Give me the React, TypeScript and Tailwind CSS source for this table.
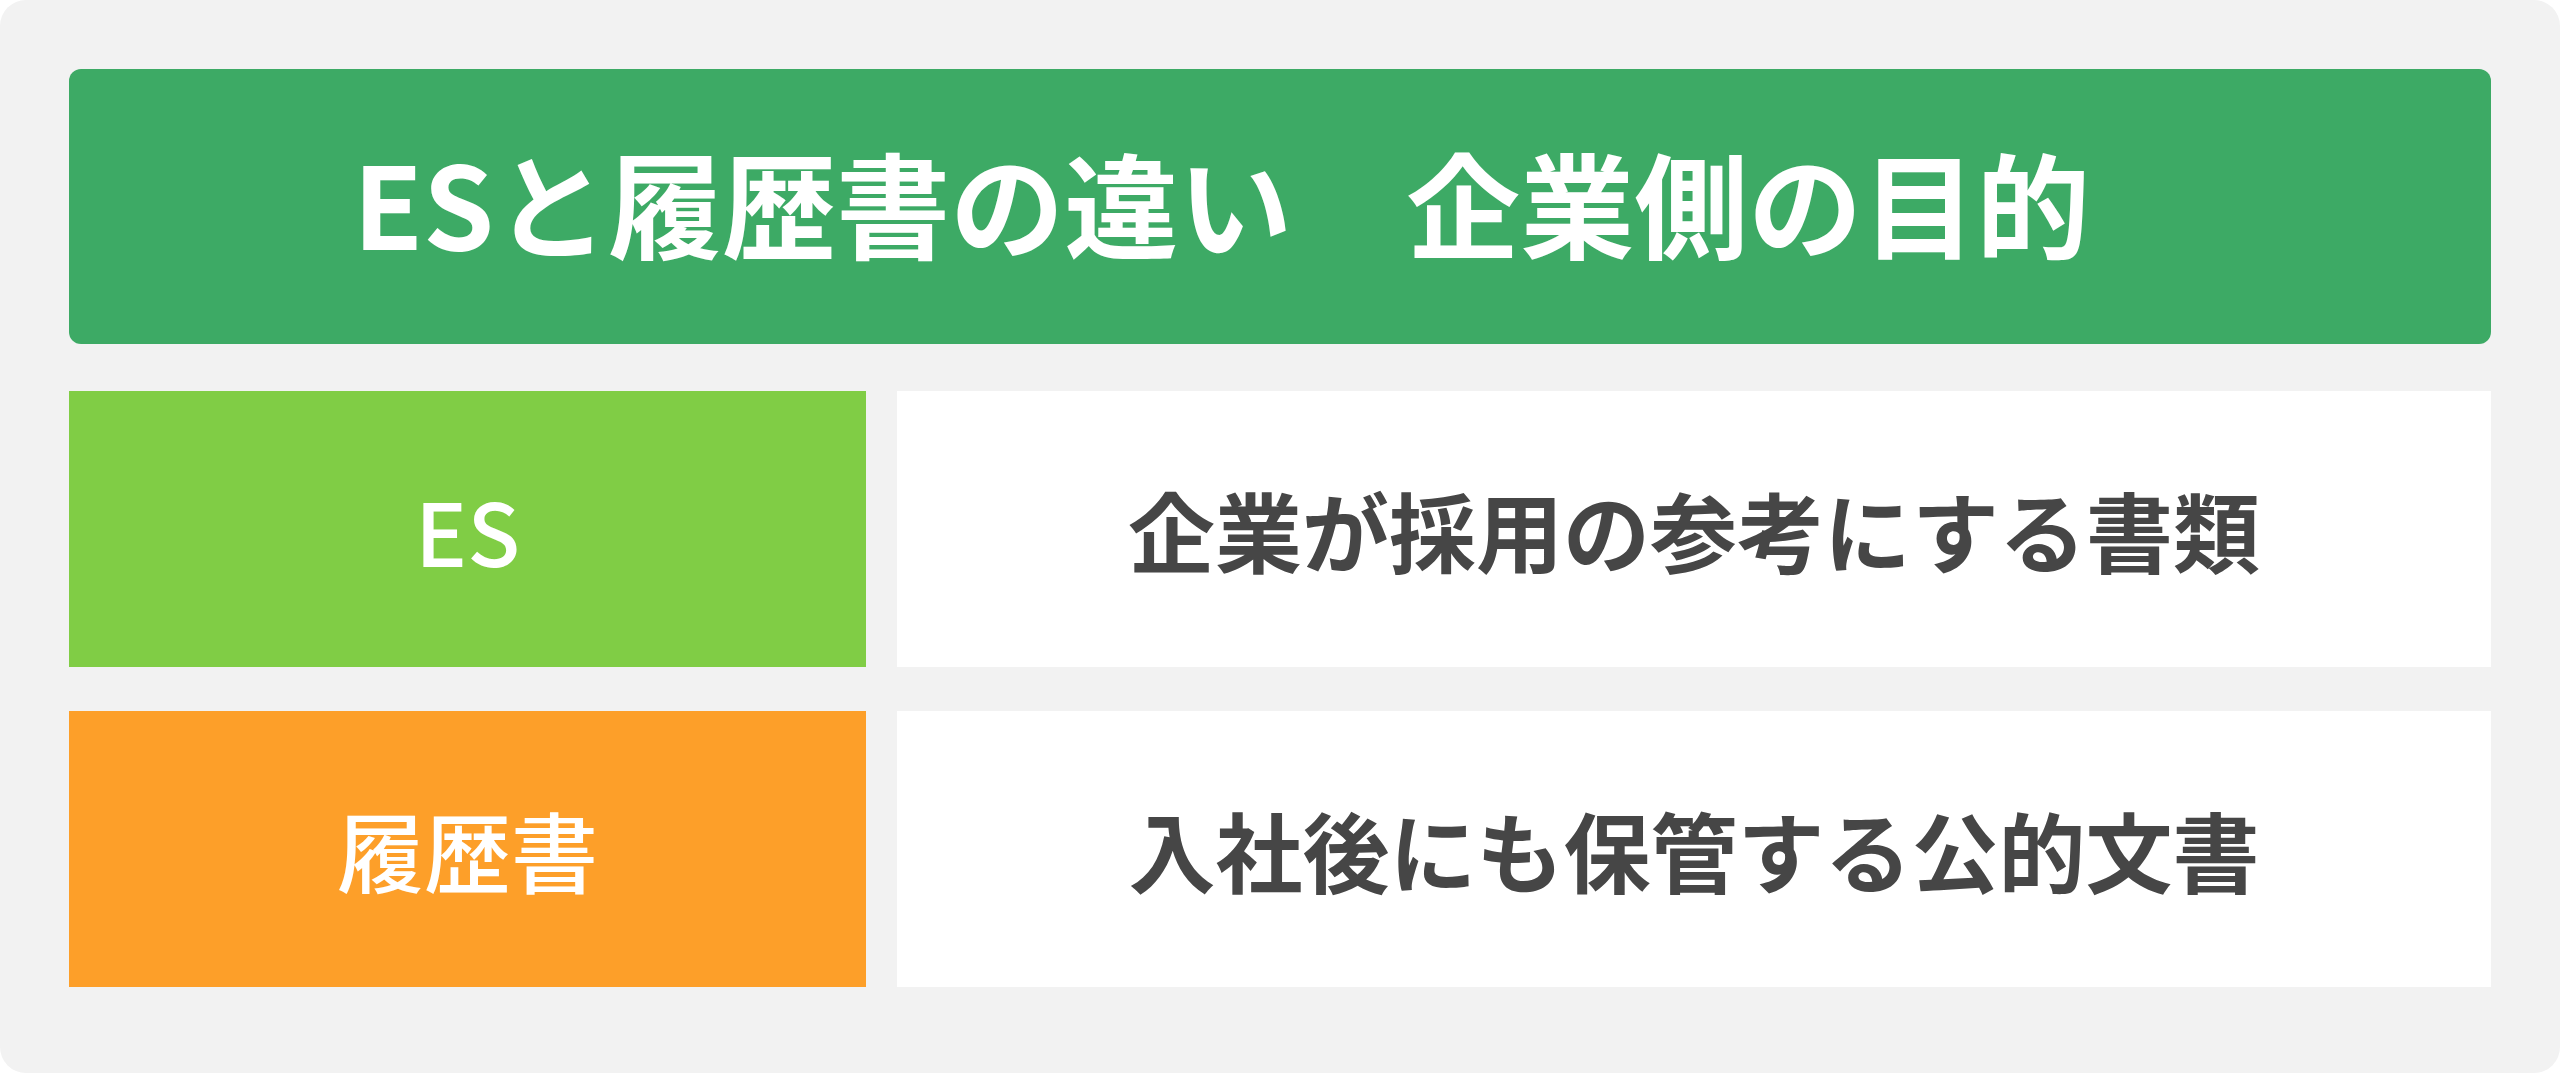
const rows = [
    { label: 'ES', labelBg: 'bg-[#80cd45]', text: '企業が採用の参考にする書類' },
    { label: '履歴書', labelBg: 'bg-[#fd9f29]', text: '入社後にも保管する公的文書' },
];

export default function App() {
    return (
        <div className="h-[1073px] w-[2560px] bg-white" style={{ fontFamily: '"Noto Sans CJK JP", "Noto Sans", sans-serif' }}>
            <div className="flex h-full w-full flex-col rounded-[26px] bg-[#f2f2f2] px-[69px] pt-[69px]">
                <div className="flex h-[275px] items-center rounded-[12px] bg-[#3daa65] pb-[12px] pl-[284px]">
                    <h1 className="text-[114px] font-bold leading-none text-white">ESと履歴書の違い　企業側の目的</h1>
                </div>

                <div className="mt-[47px] flex flex-col gap-[44px]">
                    {rows.map((row) => (
                        <div key={row.label} className="flex h-[276px] gap-[31px]">
                            <div className={`flex w-[797px] items-center justify-center ${row.labelBg}`}>
                                <span className="text-[87px] font-medium leading-none text-white">{row.label}</span>
                            </div>
                            <div className="flex flex-1 items-center justify-center bg-white">
                                <span className="text-[87px] font-bold leading-none text-[#464646]">{row.text}</span>
                            </div>
                        </div>
                    ))}
                </div>
            </div>
        </div>
    );
}
